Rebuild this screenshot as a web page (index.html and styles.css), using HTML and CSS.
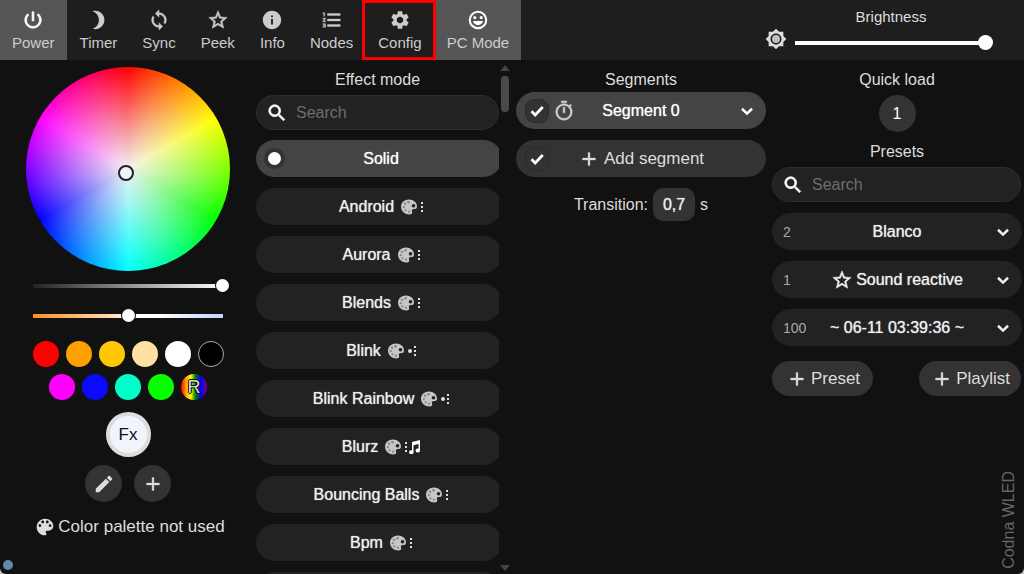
FILE: index.html
```html
<!DOCTYPE html>
<html lang="en">
<head>
<meta charset="utf-8">
<meta name="viewport" content="width=device-width, initial-scale=1">
<title>Codna WLED</title>
<link rel="stylesheet" href="styles.css">
</head>
<body>
<svg class="sprite" aria-hidden="true">
  <symbol id="power" viewBox="0 0 24 24"><path d="M13 3h-2v10h2V3zm4.83 2.17l-1.42 1.42C17.99 7.86 19 9.81 19 12c0 3.87-3.13 7-7 7s-7-3.13-7-7c0-2.19 1.01-4.14 2.58-5.42L6.17 5.17C4.23 6.82 3 9.26 3 12c0 4.97 4.03 9 9 9s9-4.03 9-9c0-2.74-1.23-5.18-3.17-6.83z" stroke="currentColor" stroke-width=".7"/></symbol>
  <symbol id="moon" viewBox="0 0 24 24"><path d="M9 2c-1.05 0-2.05.16-3 .46 4.06 1.27 7 5.06 7 9.54s-2.94 8.27-7 9.54c.95.3 1.95.46 3 .46 5.52 0 10-4.48 10-10S14.52 2 9 2z"/></symbol>
  <symbol id="sync" viewBox="0 0 24 24"><path stroke="currentColor" stroke-width=".5" d="M12 4V1L8 5l4 4V6c3.31 0 6 2.69 6 6 0 1.01-.25 1.97-.7 2.8l1.46 1.46C19.54 15.03 20 13.57 20 12c0-4.42-3.58-8-8-8zm0 14c-3.31 0-6-2.69-6-6 0-1.01.25-1.97.7-2.8L5.24 7.74C4.46 8.97 4 10.43 4 12c0 4.42 3.58 8 8 8v3l4-4-4-4v3z"/></symbol>
  <symbol id="star" viewBox="0 0 24 24"><path stroke="currentColor" stroke-width=".6" d="M22 9.24l-7.19-.62L12 2 9.19 8.63 2 9.24l5.46 4.73L5.82 21 12 17.27 18.18 21l-1.63-7.03L22 9.24zM12 15.4l-3.76 2.27 1-4.28-3.32-2.88 4.38-.38L12 6.1l1.71 4.04 4.38.38-3.32 2.88 1 4.28L12 15.4z"/></symbol>
  <symbol id="info" viewBox="0 0 24 24"><path d="M12 2C6.48 2 2 6.48 2 12s4.48 10 10 10 10-4.48 10-10S17.52 2 12 2zm1 15h-2v-6h2v6zm0-8h-2V7h2v2z"/></symbol>
  <symbol id="nodes" viewBox="0 0 24 24"><path stroke="currentColor" stroke-width=".4" d="M2 17h2v.5H3v1h1v.5H2v1h3v-4H2v1zm1-9h1V4H2v1h1v3zm-1 3h1.8L2 13.1v.9h3v-1H3.2L5 10.9V10H2v1zm5-6v2h14V5H7zm0 14h14v-2H7v2zm0-6h14v-2H7v2z"/></symbol>
  <symbol id="gear" viewBox="0 0 24 24"><path d="M19.14 12.94c.04-.3.06-.61.06-.94s-.02-.64-.07-.94l2.03-1.58c.18-.14.23-.41.12-.61l-1.92-3.32c-.12-.22-.37-.29-.59-.22l-2.39.96c-.5-.38-1.03-.7-1.62-.94l-.36-2.54c-.04-.24-.24-.41-.48-.41h-3.84c-.24 0-.43.17-.47.41l-.36 2.54c-.59.24-1.13.57-1.62.94l-2.39-.96c-.22-.08-.47 0-.59.22L2.74 8.87c-.12.21-.08.47.12.61l2.03 1.58c-.05.3-.09.63-.09.94s.02.64.07.94l-2.03 1.58c-.18.14-.23.41-.12.61l1.92 3.32c.12.22.37.29.59.22l2.39-.96c.5.38 1.03.7 1.62.94l.36 2.54c.05.24.24.41.48.41h3.84c.24 0 .44-.17.47-.41l.36-2.54c.59-.24 1.13-.56 1.62-.94l2.39.96c.22.08.47 0 .59-.22l1.92-3.32c.12-.22.07-.47-.12-.61l-2.01-1.58zM12 15.6c-1.98 0-3.6-1.62-3.6-3.6s1.62-3.6 3.6-3.6 3.6 1.62 3.6 3.6-1.62 3.6-3.6 3.6z"/></symbol>
  <symbol id="face" viewBox="0 0 24 24"><circle cx="12" cy="12" r="9" fill="none" stroke="currentColor" stroke-width="2.2"/><circle cx="8.5" cy="9.4" r="1.7"/><circle cx="15.5" cy="9.4" r="1.7"/><path d="M6.5 13.2h11c-.7 2.7-2.8 4.5-5.5 4.5s-4.8-1.8-5.5-4.5z"/></symbol>
  <symbol id="sun" viewBox="0 0 24 24"><path d="M20 8.69V4h-4.69L12 .69 8.69 4H4v4.69L.69 12 4 15.31V20h4.69L12 23.31 15.31 20H20v-4.69L23.31 12 20 8.69zM12 18c-3.31 0-6-2.69-6-6s2.69-6 6-6 6 2.69 6 6-2.69 6-6 6z" fill-rule="evenodd"/><circle cx="12" cy="12" r="4.3" opacity=".85"/></symbol>
  <symbol id="search" viewBox="0 0 24 24"><path stroke="currentColor" stroke-width=".7" d="M15.5 14h-.79l-.28-.27C15.41 12.59 16 11.11 16 9.5 16 5.91 13.09 3 9.5 3S3 5.91 3 9.5 5.91 16 9.5 16c1.61 0 3.09-.59 4.23-1.57l.27.28v.79l5 4.99L20.49 19l-4.99-5zm-6 0C7.01 14 5 11.99 5 9.5S7.01 5 9.5 5 14 7.01 14 9.5 11.99 14 9.5 14z"/></symbol>
  <symbol id="plus" viewBox="0 0 24 24"><path d="M19 13h-6v6h-2v-6H5v-2h6V5h2v6h6z" stroke="currentColor" stroke-width=".4"/></symbol>
  <symbol id="pencil" viewBox="0 0 24 24"><path d="M3 17.25V21h3.75L17.81 9.94l-3.75-3.75L3 17.25zM20.71 7.04c.39-.39.39-1.02 0-1.41l-2.34-2.34c-.39-.39-1.02-.39-1.41 0l-1.83 1.83 3.75 3.75 1.83-1.83z"/></symbol>
  <symbol id="clock" viewBox="0 0 24 24"><path stroke="currentColor" stroke-width=".5" d="M15 1H9v2h6V1zm-4 13h2V8h-2v6zm8.03-6.61l1.42-1.42c-.43-.51-.9-.99-1.41-1.41l-1.42 1.42C16.07 4.74 14.12 4 12 4c-4.97 0-9 4.03-9 9s4.02 9 9 9 9-4.03 9-9c0-2.12-.74-4.07-1.97-5.61zM12 20c-3.87 0-7-3.13-7-7s3.13-7 7-7 7 3.13 7 7-3.13 7-7 7z"/></symbol>
  <symbol id="chevron" viewBox="0 0 24 24"><path d="M6.5 9.5L12 14.8l5.500-5.300" fill="none" stroke="currentColor" stroke-width="2.8"/></symbol>
  <symbol id="tick" viewBox="0 0 24 24"><path d="M6 12.3l4 4 8.300-8.600" fill="none" stroke="currentColor" stroke-width="3"/></symbol>
  <symbol id="palette" viewBox="0 0 24 24"><path d="M12 2C6.500 2 2 6.500 2 12s4.500 10 10 10c.920 0 1.670-.750 1.670-1.670 0-.430-.170-.820-.430-1.120-.260-.290-.420-.680-.420-1.100 0-.920.750-1.670 1.670-1.670h1.960c3.070 0 5.550-2.490 5.550-5.560C22 5.980 17.500 2 12 2zM5.900 12c-.920 0-1.670-.750-1.670-1.670s.750-1.670 1.670-1.670 1.670.750 1.670 1.670S6.820 12 5.900 12zm3.330-4.440c-.920 0-1.670-.750-1.670-1.670s.750-1.670 1.670-1.670 1.670.750 1.670 1.670-.750 1.670-1.670 1.670zm5.550 0c-.920 0-1.670-.750-1.670-1.670s.750-1.670 1.670-1.670 1.670.750 1.670 1.670-.750 1.670-1.670 1.670zM18.100 12c-.920 0-1.670-.750-1.670-1.670s.750-1.670 1.670-1.670 1.670.750 1.670 1.670S19.020 12 18.100 12z"/></symbol>
  <symbol id="paint" viewBox="0 0 16 16"><path fill="#c4c6c8" d="M8 .5C3.500.5 0 3.500 0 7.800c0 4.500 4 7.700 8.500 7.700 2.200 0 3-1 2.600-2.500-.3-1.300-.6-2.400.7-2.800 1-.3 4.200.5 4.200-2.700C16 3.500 12.500.5 8 .5z"/><g fill="#85898c"><circle cx="7.500" cy="3.200" r="1.300"/><circle cx="4" cy="4.800" r="1.200"/><circle cx="2.800" cy="8.200" r="1.100"/><circle cx="4.500" cy="11.300" r="1.100"/><circle cx="8" cy="12.700" r="1.100"/></g><circle cx="12.500" cy="6.800" r="1.800" fill="#222"/></symbol>
  <symbol id="dots" viewBox="0 0 2 10"><path d="M0 0h2v2H0zM0 4h2v2H0zM0 8h2v2H0z"/></symbol>
  <symbol id="bullet" viewBox="0 0 4 4"><circle cx="2" cy="2" r="2"/></symbol>
  <symbol id="notes" viewBox="0 0 11 14"><path d="M3 2l8-2v10.500a2.200 2 0 1 1-1.500-1.900V4l-5 1.200v7a2.200 2 0 1 1-1.500-1.900z"/></symbol>
</svg>
<div class="app">
  <header class="topbar">
    <nav class="tabs" aria-label="Main">
      <button class="tab active"><svg class="icon"><use href="#power"/></svg>Power</button>
      <button class="tab"><svg class="icon"><use href="#moon"/></svg>Timer</button>
      <button class="tab"><svg class="icon"><use href="#sync"/></svg>Sync</button>
      <button class="tab"><svg class="icon"><use href="#star"/></svg>Peek</button>
      <button class="tab"><svg class="icon"><use href="#info"/></svg>Info</button>
      <button class="tab"><svg class="icon"><use href="#nodes"/></svg>Nodes</button>
      <button class="tab marked"><svg class="icon"><use href="#gear"/></svg>Config</button>
      <button class="tab active"><svg class="icon"><use href="#face"/></svg>PC Mode</button>
    </nav>
    <div class="brightness">
      <svg class="icon"><use href="#sun"/></svg>
      <div class="level">
        <label for="bri">Brightness</label>
        <input class="slider large" id="bri" type="range" min="0" max="255" value="255">
      </div>
    </div>
  </header>
  <main class="columns">
    <section class="colors" aria-label="Colors">
      <div class="wheel"><span class="cursor"></span></div>
      <input class="slider value" type="range" value="100" aria-label="Value">
      <input class="slider kelvin" type="range" value="50" aria-label="Temperature">
      <div class="swatches">
        <button class="swatch red" aria-label="Red"></button>
        <button class="swatch orange" aria-label="Orange"></button>
        <button class="swatch amber" aria-label="Amber"></button>
        <button class="swatch warm" aria-label="Warm white"></button>
        <button class="swatch white" aria-label="White"></button>
        <button class="swatch black" aria-label="Black"></button>
        <button class="swatch magenta" aria-label="Magenta"></button>
        <button class="swatch blue" aria-label="Blue"></button>
        <button class="swatch aqua" aria-label="Aqua"></button>
        <button class="swatch green" aria-label="Green"></button>
        <button class="swatch random" title="Random">R</button>
      </div>
      <button class="slot">Fx</button>
      <div class="tools">
        <button class="round" aria-label="Edit"><svg class="icon"><use href="#pencil"/></svg></button>
        <button class="round" aria-label="Add"><svg class="icon"><use href="#plus"/></svg></button>
      </div>
      <p class="note"><svg class="icon"><use href="#palette"/></svg>Color palette not used</p>
      <span class="status"></span>
    </section>

    <section class="effects">
      <div class="list">
        <h2>Effect mode</h2>
        <label class="search"><svg class="icon"><use href="#search"/></svg><input type="search" placeholder="Search" aria-label="Search effects"></label>
        <label class="pill effect selected"><input class="radio" type="radio" name="fx" checked>Solid</label>
        <button class="pill effect">Android <span class="tags"><svg class="paint"><use href="#paint"/></svg><svg class="dots"><use href="#dots"/></svg></span></button>
        <button class="pill effect">Aurora <span class="tags"><svg class="paint"><use href="#paint"/></svg><svg class="dots"><use href="#dots"/></svg></span></button>
        <button class="pill effect">Blends <span class="tags"><svg class="paint"><use href="#paint"/></svg><svg class="dots"><use href="#dots"/></svg></span></button>
        <button class="pill effect">Blink <span class="tags"><svg class="paint"><use href="#paint"/></svg><svg class="bullet"><use href="#bullet"/></svg><svg class="dots"><use href="#dots"/></svg></span></button>
        <button class="pill effect">Blink Rainbow <span class="tags"><svg class="paint"><use href="#paint"/></svg><svg class="bullet"><use href="#bullet"/></svg><svg class="dots"><use href="#dots"/></svg></span></button>
        <button class="pill effect">Blurz <span class="tags"><svg class="paint"><use href="#paint"/></svg><svg class="dots"><use href="#dots"/></svg><svg class="notes"><use href="#notes"/></svg></span></button>
        <button class="pill effect">Bouncing Balls <span class="tags"><svg class="paint"><use href="#paint"/></svg><svg class="dots"><use href="#dots"/></svg></span></button>
        <button class="pill effect">Bpm <span class="tags"><svg class="paint"><use href="#paint"/></svg><svg class="dots"><use href="#dots"/></svg></span></button>
        <button class="pill effect" aria-label="Next effect"></button>
      </div>
      <div class="scrollbar" aria-hidden="true"><i class="up"></i><i class="thumb"></i><i class="down"></i></div>
    </section>

    <section class="segments">
      <h2>Segments</h2>
      <div class="pill selected row">
        <label class="check"><input type="checkbox" checked aria-label="Select segment 0"><svg class="icon"><use href="#tick"/></svg></label>
        <svg class="icon muted"><use href="#clock"/></svg>
        <span class="name">Segment 0</span>
        <button class="more" aria-label="Expand segment 0"><svg class="icon"><use href="#chevron"/></svg></button>
      </div>
      <div class="pill raised row">
        <label class="check"><input type="checkbox" checked aria-label="Select all segments"><svg class="icon"><use href="#tick"/></svg></label>
        <button class="add"><svg class="icon"><use href="#plus"/></svg>Add segment</button>
      </div>
      <div class="transition"><label for="tt">Transition:</label><input id="tt" type="text" value="0,7"><span>s</span></div>
    </section>

    <section class="presets">
      <h2>Quick load</h2>
      <button class="round quick">1</button>
      <h2>Presets</h2>
      <label class="search"><svg class="icon"><use href="#search"/></svg><input type="search" placeholder="Search" aria-label="Search presets"></label>
      <div class="pill row"><span class="id">2</span><span class="name">Blanco</span><button class="more" aria-label="Expand Blanco"><svg class="icon"><use href="#chevron"/></svg></button></div>
      <div class="pill row"><span class="id">1</span><span class="name"><svg class="icon"><use href="#star"/></svg>Sound reactive</span><button class="more" aria-label="Expand Sound reactive"><svg class="icon"><use href="#chevron"/></svg></button></div>
      <div class="pill row"><span class="id">100</span><span class="name">~ 06-11 03:39:36 ~</span><button class="more" aria-label="Expand preset 100"><svg class="icon"><use href="#chevron"/></svg></button></div>
      <div class="actions">
        <button class="create"><svg class="icon"><use href="#plus"/></svg>Preset</button>
        <button class="create"><svg class="icon"><use href="#plus"/></svg>Playlist</button>
      </div>
      <span class="brand">Codna WLED</span>
    </section>
  </main>
</div>
</body>
</html>
```
FILE: styles.css
```css
* { box-sizing: border-box; }
html { background: #c8c8c8; }
body {
  margin: 0;
  color: #ddd;
  font: 16px/20px "Liberation Sans", Arial, sans-serif;
}
button, input { font: inherit; color: inherit; }
button { border: 0; padding: 0; background: none; cursor: pointer; }
h2 { margin: 0; font-size: 16px; font-weight: 400; line-height: 20px; text-align: center; }
.sprite { position: absolute; width: 0; height: 0; }
.icon { width: 22px; height: 22px; flex: none; fill: currentColor; }

.app {
  display: flex;
  flex-direction: column;
  height: 100vh;
  overflow: hidden;
  background: #111;
  border-radius: 0 0 6px 6px;
}

/* Top bar */
.topbar { display: flex; justify-content: space-between; background: #1e1e1e; flex: none; }
.tabs { display: flex; gap: 1px; font-size: 15px; }
.tab {
  display: flex;
  flex-direction: column;
  align-items: center;
  gap: 2px;
  padding: 9px 12px 7px;
  color: #ccc;
}
.tab.active { background: #555; }
.tab.active .icon { color: #fff; }
.tab.marked {
  z-index: 1;
  margin: 0 -2px 0 -4px;
  padding: 9px 14px 7px 16px;
  outline: 3px solid #f00;
  outline-offset: -3px;
}
.brightness { display: flex; align-items: flex-end; padding: 6px 31px 10px 0; font-size: 15px; }
.brightness > .icon { color: #ddd; }
.level { display: flex; flex-direction: column; align-items: center; gap: 8px; margin-left: 2px; width: 204px; }

/* Sliders */
.slider { appearance: none; display: block; width: 100%; height: 13px; margin: 0; background: none; }
.slider::-webkit-slider-runnable-track {
  height: 13px;
  background: var(--track) center / calc(100% - 12px) 4px no-repeat;
}
.slider::-webkit-slider-thumb {
  appearance: none;
  width: 13px;
  height: 13px;
  border-radius: 50%;
  background: #fff;
  box-shadow: 0 0 0 1px #111;
}
.large { --track: linear-gradient(#fff, #fff); height: 15px; }
.large::-webkit-slider-runnable-track { height: 15px; }
.large::-webkit-slider-thumb { width: 15px; height: 15px; box-shadow: none; }
.value { --track: linear-gradient(90deg, #222, #fff); }
.kelvin { --track: linear-gradient(90deg, #ff8f1c, #ffd9b0 40%, #fff 52%, #fff 65%, #c4d4ff); }

/* Columns */
.columns { display: grid; grid-template-columns: repeat(4, minmax(0, 1fr)); flex: 1; min-height: 0; }

.colors { position: relative; display: flex; flex-direction: column; align-items: center; padding-top: 7px; }
.colors .slider { width: 202px; }
.colors .value { margin-top: 8px; }
.colors .kelvin { margin-top: 17px; }
.wheel {
  position: relative;
  width: 204px;
  height: 204px;
  border-radius: 50%;
  background:
    radial-gradient(closest-side, #f2f2f2, rgba(255, 255, 255, 0)),
    conic-gradient(#f00, #ff0 60deg, #0f0 120deg, #0ff 180deg, #00f 240deg, #f0f 300deg, #f00);
}
.cursor {
  position: absolute;
  left: 92px;
  top: 98px;
  width: 16px;
  height: 16px;
  border: 2px solid #222;
  border-radius: 50%;
  background: #f0f4fc;
}
.swatches { display: flex; flex-wrap: wrap; justify-content: center; gap: 7px; width: 204px; margin-top: 19px; }
.swatch { width: 26px; height: 26px; border-radius: 50%; }
.red { background: #f00; }
.orange { background: #ffa000; }
.amber { background: #ffc800; }
.warm { background: #ffe0a0; }
.white { background: #fff; }
.black { background: #000; border: 1px solid #aaa; }
.magenta { background: #f0f; }
.blue { background: #0a0aff; }
.aqua { background: #00ffc8; }
.green { background: #08ff00; }
.random {
  background: linear-gradient(90deg, red, orange 20%, yellow 38%, green 55%, blue 75%, purple);
  color: #ddd;
  font-size: 18px;
  line-height: 24px;
  text-shadow: 1px 0 #000, -1px 0 #000, 0 1px #000, 0 -1px #000;
}
.slot {
  width: 45px;
  height: 45px;
  margin-top: 12px;
  border: 4px solid #ddd;
  border-radius: 50%;
  background: #f0f4fc;
  color: #111;
  font-size: 17px;
}
.tools { display: flex; gap: 12px; margin-top: 8px; }
.round { display: grid; place-items: center; width: 37px; height: 37px; border-radius: 50%; background: #333; color: #ddd; }
.note { display: flex; align-items: center; gap: 3px; margin: 15px 0 0; padding-left: 4px; font-size: 17px; }
.note .icon { width: 20px; height: 20px; }
.status { position: absolute; left: 3px; bottom: 4px; width: 10px; height: 10px; border-radius: 50%; background: #6188a8; }

/* Shared rows */
.pill {
  display: flex;
  align-items: center;
  justify-content: center;
  height: 37px;
  margin-top: 11px;
  border-radius: 19px;
  background: #222;
  color: #eee;
  text-shadow: 0 0 1px #ddd;
}
.pill.selected { background: #444; color: #fff; }
.pill.raised { background: #333; color: #ddd; text-shadow: none; }
.search {
  display: flex;
  align-items: center;
  height: 35px;
  padding: 0 9px;
  border: 1px solid #2e2e2e;
  border-radius: 18px;
  background: #222;
  color: #fff;
}
.search input { flex: 1; min-width: 0; margin-left: 8px; padding: 0; border: 0; background: none; outline: 0; }
.search input::placeholder { color: #6e6e6e; }

/* Effects */
.effects { display: flex; justify-content: space-between; min-height: 0; overflow: hidden; }
.list { flex: 1; padding-top: 10px; overflow: hidden; }
.list .search { margin-top: 5px; }
.effect { position: relative; width: calc(100% + 3px); padding-left: 4px; }
.effect.selected { margin-top: 10px; }
.radio {
  appearance: none;
  position: absolute;
  left: 8px;
  width: 21px;
  height: 21px;
  margin: 0;
  border: 4px solid #333;
  border-radius: 50%;
  background: #fff;
}
.tags { display: flex; align-items: center; gap: 4px; margin-left: 7px; fill: #ddd; }
.paint { width: 16px; height: 16px; }
.dots { width: 2px; height: 10px; }
.bullet { width: 4px; height: 4px; margin-right: -2px; }
.notes { width: 11px; height: 14px; margin-left: -2px; fill: #fff; }
.scrollbar { display: flex; flex-direction: column; align-items: center; width: 12px; margin-right: 1px; padding: 5px 0 3px; }
.up, .down { border: 5px solid transparent; }
.up { border-top: 0; border-bottom: 6px solid #444; }
.down { border-bottom: 0; border-top: 6px solid #444; margin-top: auto; }
.thumb { width: 8px; height: 36px; margin-top: 5px; border-radius: 4px; background: #4a4a4a; }

/* Segments */
.segments, .presets { padding: 10px 2px 0 4px; }
.segments h2 + .pill { margin-top: 2px; }
.row { display: grid; grid-template-columns: 34px 24px 1fr 58px; padding-left: 0; }
.check { display: grid; place-items: center; margin-left: 8px; width: 25px; height: 25px; }
.check input, .check .icon { grid-area: 1 / 1; }
.check input { appearance: none; width: 24px; height: 24px; margin: 0; border: 1px solid #2b2b2b; border-radius: 9px; background: #333; }
.check .icon { position: relative; color: #fff; pointer-events: none; }
.muted { color: #ccc; margin-left: 3px; }
.name { display: flex; align-items: center; justify-content: center; gap: 3px; white-space: nowrap; }
.more { display: grid; justify-self: end; margin-right: 8px; }
.add { grid-column: 2 / 4; display: flex; align-items: center; justify-content: center; gap: 8px; font-size: 17px; margin-right: -24px; }
.add .icon { margin-right: -4px; }
.transition { display: flex; align-items: center; justify-content: center; gap: 5px; margin-top: 11px; }
.transition input { width: 42px; height: 33px; padding: 0; border: 0; border-radius: 10px; background: #333; color: #eee; text-align: center; text-shadow: 0 0 1px #ddd; }

/* Presets */
.presets { position: relative; }
.quick { margin: 5px auto 10px; color: #fff; }
.presets .search { margin: 5px 1px 0 0; }
.presets .row { grid-template-columns: 42px 1fr 42px; }
.id { padding-left: 11px; color: #aaa; font-size: 14px; text-shadow: none; }
.actions { display: flex; justify-content: space-between; margin: 15px 1px 0 0; }
.create {
  display: flex;
  align-items: center;
  justify-content: center;
  gap: 3px;
  min-width: 101px;
  height: 35px;
  padding: 0 11px 0 12px;
  border-radius: 18px;
  background: #333;
  color: #ddd;
  font-size: 17px;
}
.brand { position: absolute; right: 5px; bottom: 5px; color: #666; writing-mode: vertical-rl; rotate: 180deg; }
```
